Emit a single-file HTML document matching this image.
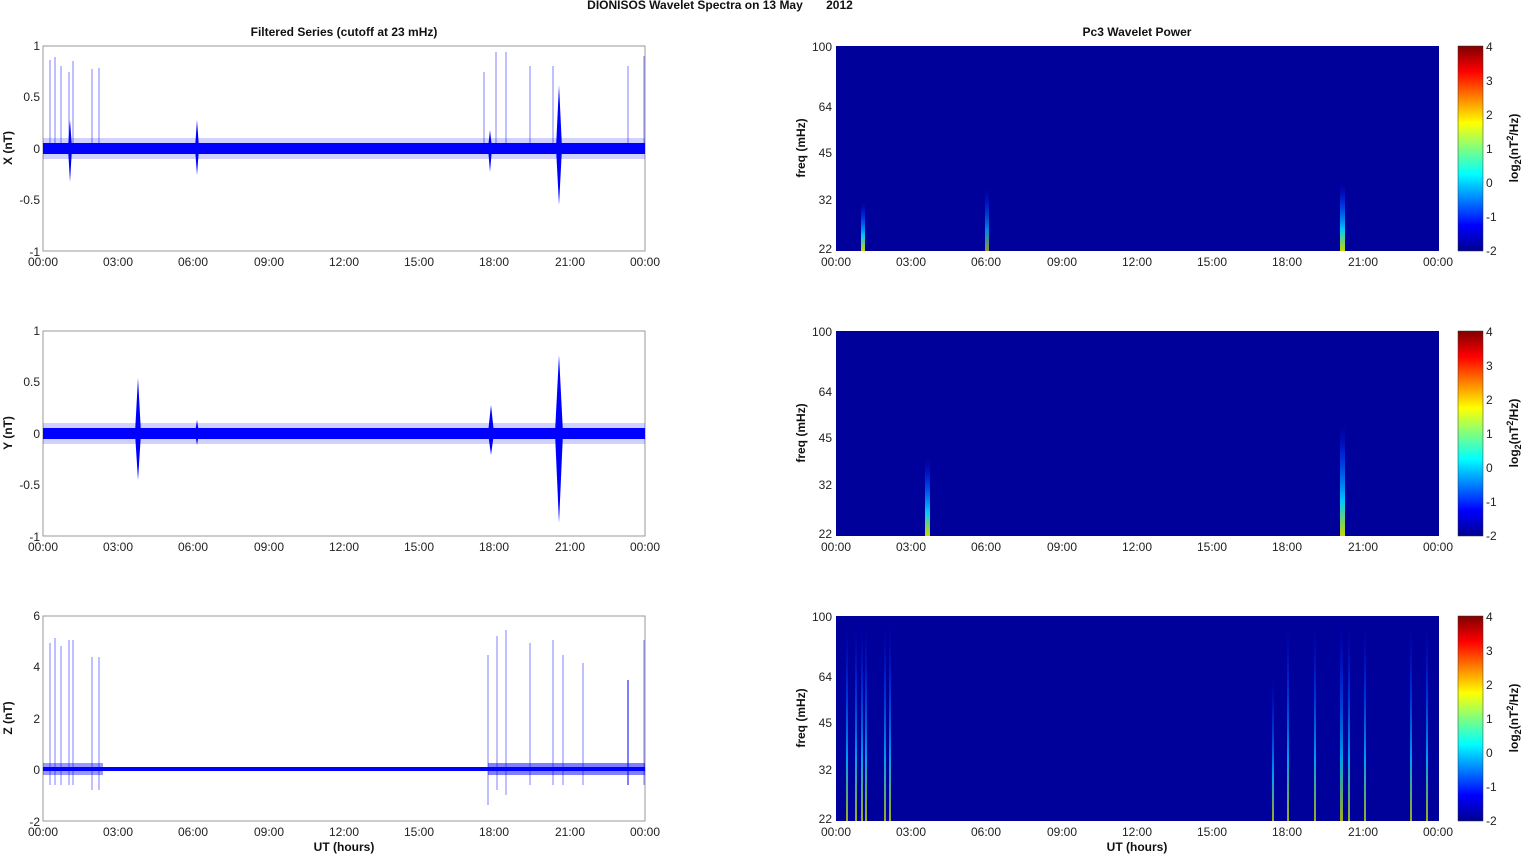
<!DOCTYPE html>
<html><head><meta charset="utf-8"><style>
html,body{margin:0;padding:0;background:#fff;}
svg{display:block;font-family:"Liberation Sans",Arial,sans-serif;}
.t{font-size:12px;fill:#222;}
.b{font-size:12px;font-weight:bold;fill:#111;}
</style></head><body>
<svg width="1525" height="854" viewBox="0 0 1525 854">
<defs>
<linearGradient id="jet" x1="0" y1="1" x2="0" y2="0">
<stop offset="0" stop-color="#00008f"/><stop offset="0.125" stop-color="#0000ff"/>
<stop offset="0.375" stop-color="#00ffff"/><stop offset="0.625" stop-color="#ffff00"/>
<stop offset="0.875" stop-color="#ff0000"/><stop offset="1" stop-color="#800000"/>
</linearGradient>
<linearGradient id="sp" x1="0" y1="1" x2="0" y2="0">
<stop offset="0" stop-color="#c8d800"/><stop offset="0.3" stop-color="#00c8ff"/><stop offset="0.7" stop-color="#0040ff" stop-opacity="0.6"/><stop offset="1" stop-color="#0000c0" stop-opacity="0"/>
</linearGradient>
</defs>
<text class="b" x="720" y="9" text-anchor="middle">DIONISOS Wavelet Spectra on 13 May &#160;&#160;&#160;&#160;&#160;&#160;2012</text>
<text class="b" x="344" y="36" text-anchor="middle">Filtered Series (cutoff at 23 mHz)</text>
<text class="b" x="1137" y="36" text-anchor="middle">Pc3 Wavelet Power</text>

<g>
<rect x="43" y="46" width="602" height="205" fill="#fff" stroke="#999"/>
<g stroke="#8080ff" stroke-width="1">
<line x1="50" y1="60" x2="50" y2="150"/><line x1="55" y1="57" x2="55" y2="150"/><line x1="61" y1="66" x2="61" y2="150"/>
<line x1="69" y1="72" x2="69" y2="150"/><line x1="73" y1="61" x2="73" y2="150"/><line x1="92" y1="69" x2="92" y2="150"/><line x1="99" y1="68" x2="99" y2="150"/>
<line x1="484" y1="72" x2="484" y2="150"/><line x1="496" y1="52" x2="496" y2="150"/><line x1="506" y1="52" x2="506" y2="150"/><line x1="530" y1="66" x2="530" y2="150"/><line x1="553" y1="66" x2="553" y2="150"/><line x1="628" y1="66" x2="628" y2="150"/><line x1="644" y1="56" x2="644" y2="150"/>
</g>
<rect x="43" y="143" width="602" height="11" fill="#0000ff"/>
<rect x="43" y="138" width="602" height="21" fill="#0000ff" opacity="0.18"/>
<path d="M68 148 L70 120 L72 148 L70 182 Z M195 148 L197 120 L199 148 L197 175 Z M556 148 L559 85 L562 148 L559 205 Z M488 148 L490 130 L492 148 L490 172 Z" fill="#0000ff"/>
</g>
<g>
<rect x="43" y="331" width="602" height="205" fill="#fff" stroke="#999"/>
<rect x="43" y="428" width="602" height="11" fill="#0000ff"/>
<rect x="43" y="423" width="602" height="21" fill="#0000ff" opacity="0.18"/>
<path d="M135 433 L138 378 L141 433 L138 480 Z M195 433 L197 420 L199 433 L197 445 Z M555 433 L559 355 L563 433 L559 523 Z M488 433 L491 405 L494 433 L491 455 Z" fill="#0000ff"/>
</g>
<g>
<rect x="43" y="616" width="602" height="205" fill="#fff" stroke="#999"/>
<g stroke="#8080ff" stroke-width="1">
<line x1="50" y1="643" x2="50" y2="785"/><line x1="55" y1="638" x2="55" y2="785"/><line x1="61" y1="646" x2="61" y2="785"/>
<line x1="69" y1="640" x2="69" y2="785"/><line x1="73" y1="640" x2="73" y2="785"/><line x1="92" y1="657" x2="92" y2="790"/><line x1="99" y1="657" x2="99" y2="790"/>
<line x1="488" y1="655" x2="488" y2="805"/><line x1="497" y1="636" x2="497" y2="790"/><line x1="506" y1="630" x2="506" y2="795"/><line x1="530" y1="643" x2="530" y2="785"/><line x1="553" y1="640" x2="553" y2="785"/><line x1="563" y1="655" x2="563" y2="785"/><line x1="583" y1="663" x2="583" y2="785"/><line x1="644" y1="640" x2="644" y2="785"/>
</g>
<line x1="628" y1="680" x2="628" y2="785" stroke="#0000ff"/>
<rect x="43" y="767" width="602" height="4" fill="#0000ff"/>
<rect x="488" y="763" width="157" height="12" fill="#0000ff" opacity="0.5"/>
<rect x="43" y="763" width="60" height="12" fill="#0000ff" opacity="0.4"/>
</g>

<g class="t" text-anchor="end">
<text x="40" y="50">1</text><text x="40" y="101">0.5</text><text x="40" y="153">0</text><text x="40" y="204">-0.5</text><text x="40" y="256">-1</text>
<text x="40" y="335">1</text><text x="40" y="386">0.5</text><text x="40" y="438">0</text><text x="40" y="489">-0.5</text><text x="40" y="541">-1</text>
<text x="40" y="620">6</text><text x="40" y="671">4</text><text x="40" y="723">2</text><text x="40" y="774">0</text><text x="40" y="826">-2</text>
</g>
<g class="b" text-anchor="middle">
<text transform="translate(12,148) rotate(-90)">X (nT)</text>
<text transform="translate(12,433) rotate(-90)">Y (nT)</text>
<text transform="translate(12,718) rotate(-90)">Z (nT)</text>
<text transform="translate(805,148) rotate(-90)">freq (mHz)</text>
<text transform="translate(805,433) rotate(-90)">freq (mHz)</text>
<text transform="translate(805,718) rotate(-90)">freq (mHz)</text>
<text x="344" y="851">UT (hours)</text><text x="1137" y="851">UT (hours)</text>
</g>
<g class="t" text-anchor="middle">
<g id="xl"><text x="43" y="266">00:00</text><text x="118" y="266">03:00</text><text x="193" y="266">06:00</text><text x="269" y="266">09:00</text><text x="344" y="266">12:00</text><text x="419" y="266">15:00</text><text x="494" y="266">18:00</text><text x="570" y="266">21:00</text><text x="645" y="266">00:00</text></g>
<use href="#xl" y="285"/><use href="#xl" y="570"/>
<use href="#xl" x="793"/><use href="#xl" x="793" y="285"/><use href="#xl" x="793" y="570"/>
</g>

<g id="R1">
<rect x="836" y="46" width="603" height="205" fill="#00009a"/>
<g class="t" text-anchor="end"><text x="832" y="51">100</text><text x="832" y="111">64</text><text x="832" y="157">45</text><text x="832" y="204">32</text><text x="832" y="253">22</text></g>
<rect x="1458" y="46" width="25" height="205" fill="url(#jet)" stroke="#333" stroke-width="0.5"/>
<g class="t"><text x="1486" y="51">4</text><text x="1486" y="85">3</text><text x="1486" y="119">2</text><text x="1486" y="153">1</text><text x="1486" y="187">0</text><text x="1486" y="221">-1</text><text x="1486" y="255">-2</text></g>
<text class="b" transform="translate(1518,148) rotate(-90)" text-anchor="middle">log<tspan font-size="9" dy="3">2</tspan><tspan dy="-3">(nT</tspan><tspan font-size="9" dy="-5">2</tspan><tspan dy="5">/Hz)</tspan></text>
</g>
<use href="#R1" y="285"/><use href="#R1" y="570"/>
<rect x="861" y="200" width="4" height="51" fill="url(#sp)"/>
<rect x="985" y="185" width="4" height="66" fill="url(#sp)" opacity="0.7"/>
<rect x="1340" y="180" width="5" height="71" fill="url(#sp)"/>
<rect x="925" y="455" width="5" height="81" fill="url(#sp)"/>
<rect x="1340" y="420" width="5" height="116" fill="url(#sp)"/>
<g fill="url(#sp)" opacity="0.8">
<rect x="846" y="616" width="2" height="205"/><rect x="855" y="616" width="2" height="205"/><rect x="861" y="616" width="2" height="205"/><rect x="865" y="616" width="2" height="205"/><rect x="884" y="616" width="2" height="205"/><rect x="889" y="616" width="2" height="205"/>
<rect x="1272" y="670" width="2" height="151"/><rect x="1287" y="616" width="2" height="205"/><rect x="1314" y="616" width="2" height="205"/><rect x="1340" y="616" width="3" height="205"/><rect x="1348" y="616" width="2" height="205"/><rect x="1364" y="616" width="2" height="205"/><rect x="1410" y="616" width="2" height="205"/><rect x="1426" y="616" width="2" height="205"/>
</g>
</svg>
</body></html>
